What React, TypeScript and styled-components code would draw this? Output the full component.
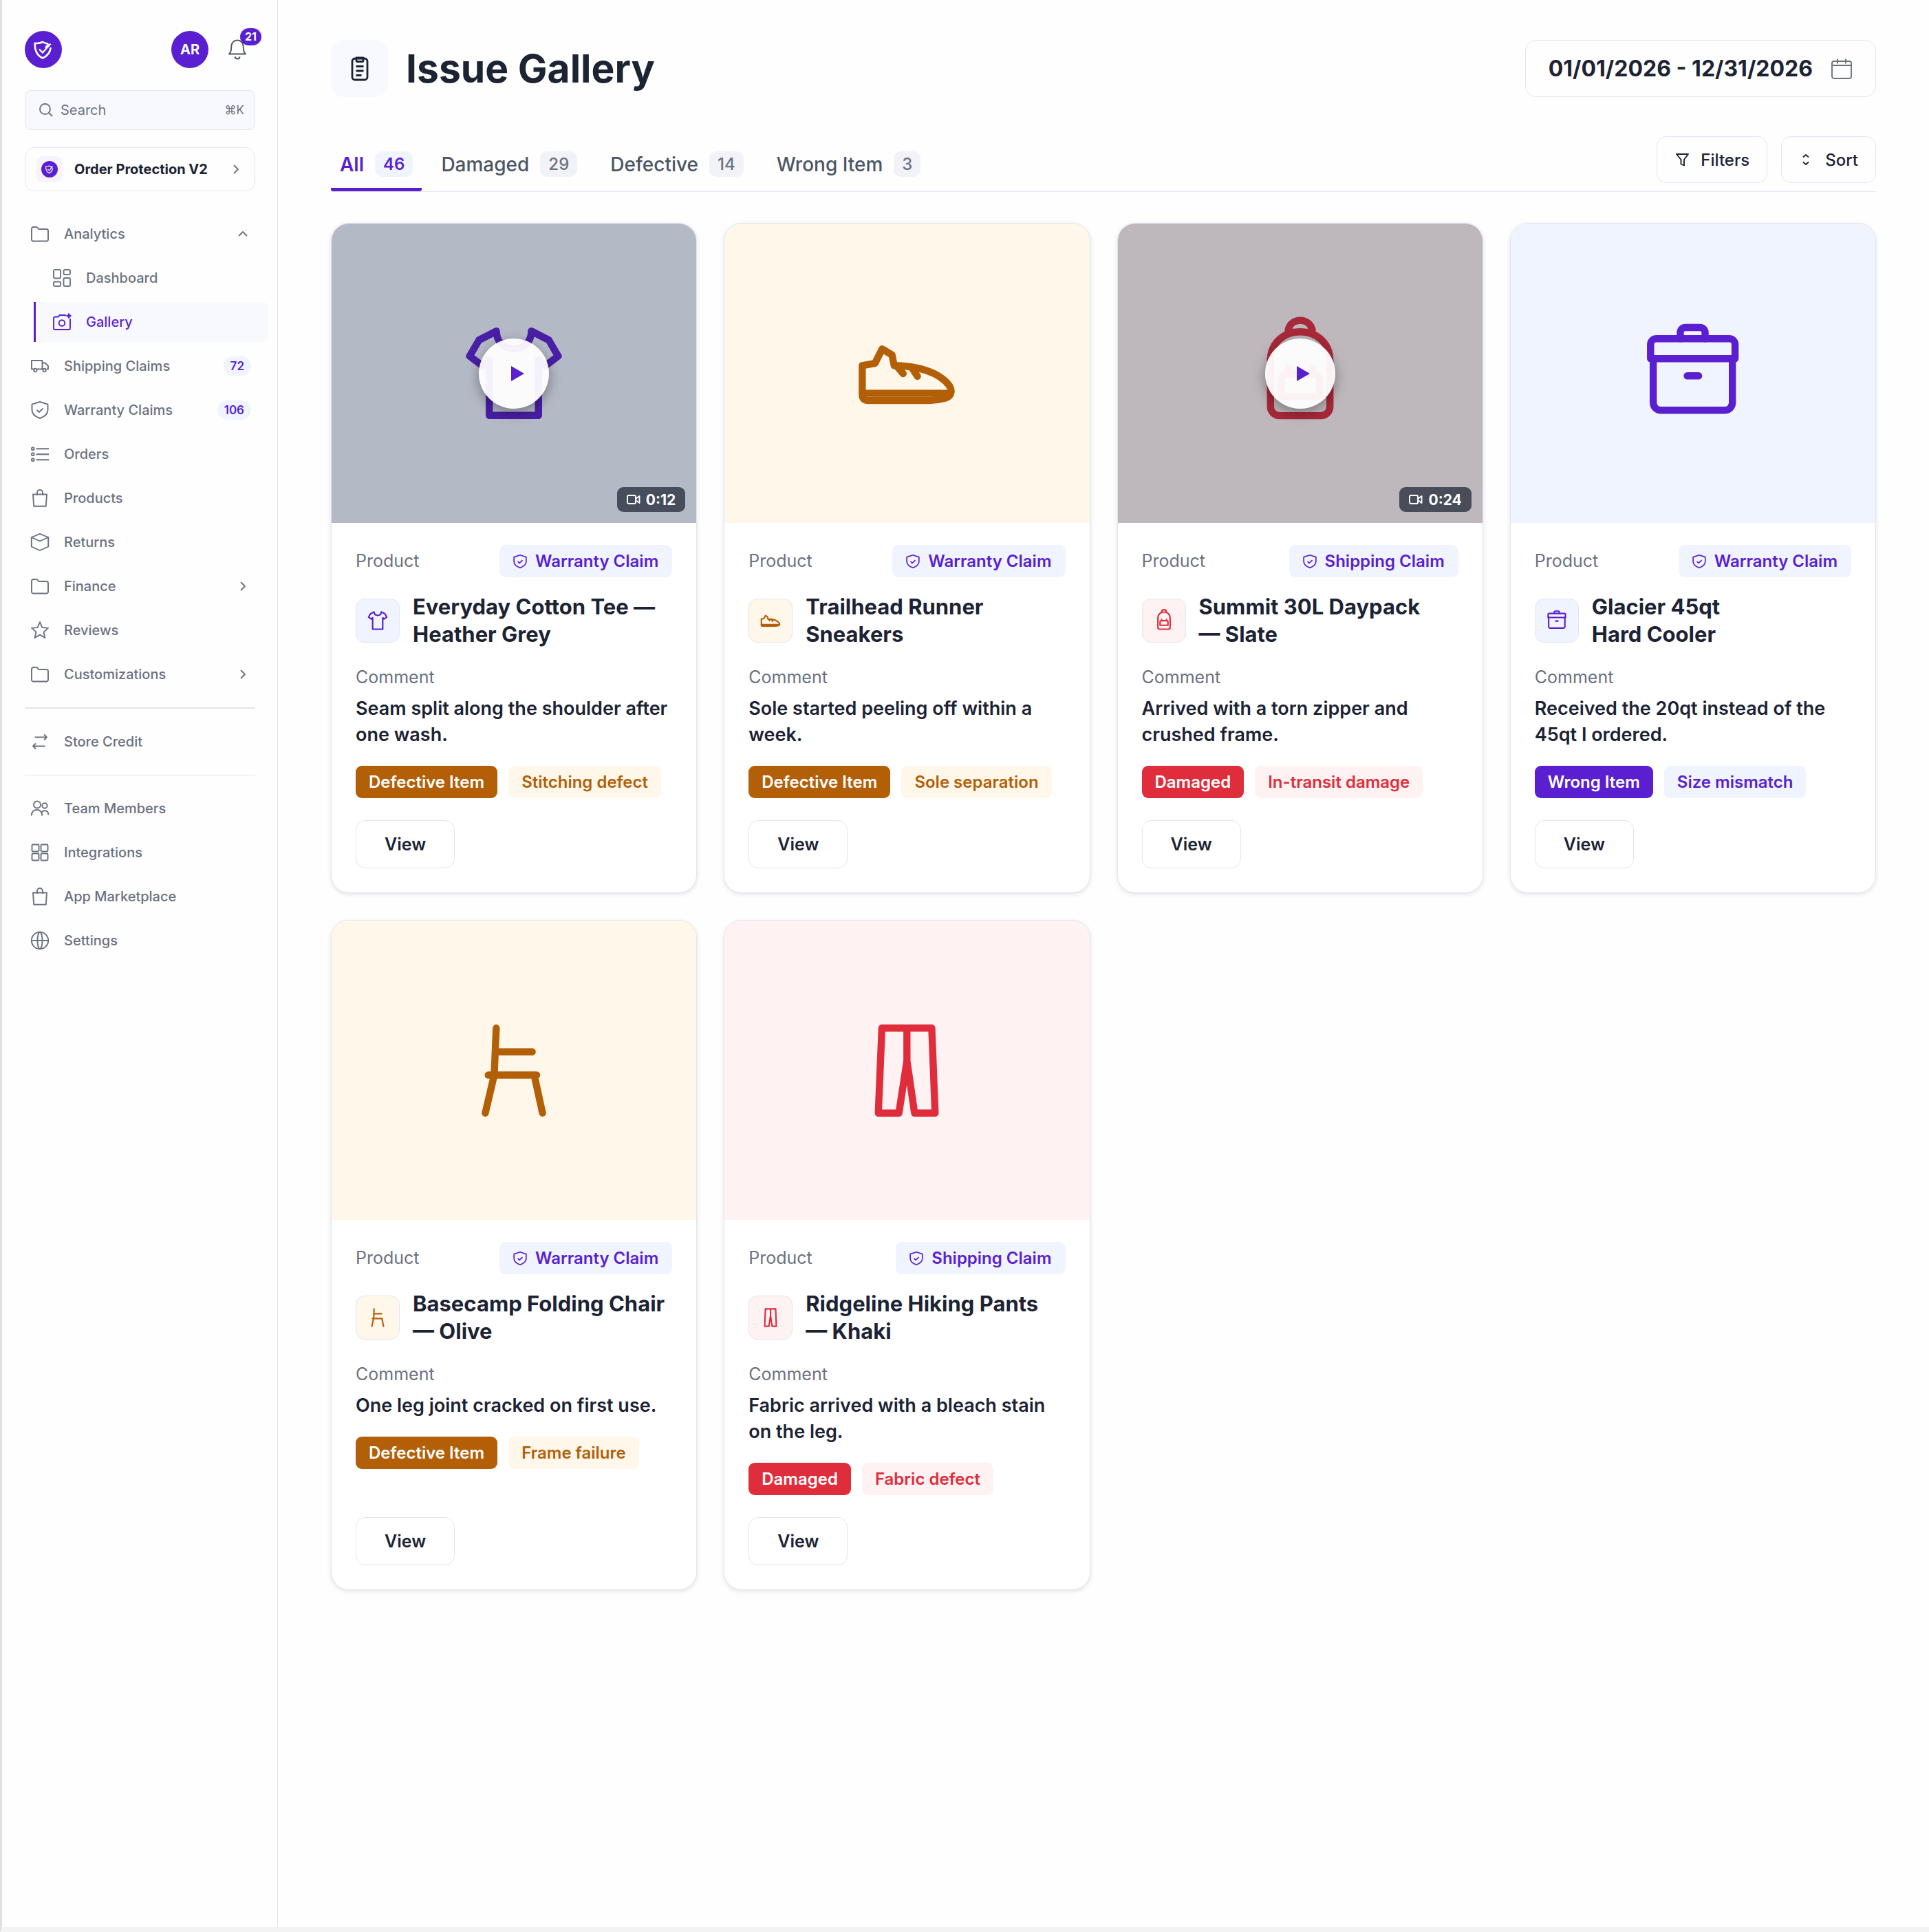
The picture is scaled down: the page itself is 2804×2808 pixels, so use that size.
import { useState } from 'react'
import type { ReactNode } from 'react'
import styled, { createGlobalStyle, css } from 'styled-components'

const color = {
  purple: '#5a1fd1',
  ink: '#1c2333',
  text: '#4b5563',
  muted: '#6b7280',
  border: '#e2e6f0',
  soft: '#f8f9fe',
}

type Tone = 'purple' | 'brown' | 'red'

const tones: Record<Tone, { main: string; light: string }> = {
  purple: { main: '#5a1fd1', light: '#f0f4ff' },
  brown: { main: '#b35f08', light: '#fff7ea' },
  red: { main: '#e02d3c', light: '#fef2f2' },
}

/* ---------- icons ---------- */

const navIcons = {
  folder: (
    <path d="M1 5.5A2.5 2.5 0 0 1 3.5 3h4.3c1 0 1.6.5 2.1 1.2l.7 1c.3.5.7.8 1.4.8h10.5A2.5 2.5 0 0 1 25 8.5v12.7A2.3 2.3 0 0 1 22.7 23.5H3.3A2.3 2.3 0 0 1 1 21.2z" />
  ),
  dashboard: (
    <>
      <rect x="1" y="1" width="10" height="12.5" rx="2" />
      <rect x="15.5" y="1" width="9.5" height="7" rx="2" />
      <rect x="1" y="18.5" width="10" height="6.5" rx="2" />
      <rect x="15.5" y="13" width="9.5" height="12" rx="2" />
    </>
  ),
  camera: (
    <>
      <path d="M19 3.5h-1l-1.500-.5h-7L8 5.5H3A2 2 0 0 0 1 7.5V22a2 2 0 0 0 2 2h20a2 2 0 0 0 2-2V8" />
      <circle cx="13" cy="14.5" r="4.3" />
      <path d="M23 .5v7M19.5 4H26.5" strokeWidth="2.6" />
    </>
  ),
  truck: (
    <>
      <path d="M4 17.5H1V5h15.500v12.500H9" />
      <path d="M16.5 8.5h4L25 13v4.500h-2.500" />
      <circle cx="6.3" cy="19" r="2.2" />
      <circle cx="19.5" cy="19" r="2.2" />
      <path d="M16.5 17.5h1" />
    </>
  ),
  shield: (
    <>
      <path d="M13 1 24.5 4.7V13c0 6-5 9.700-11.500 12C6.5 22.7 1.5 19 1.5 13V4.7z" />
      <path d="m8.5 13 3.200 3 6-5.500" />
    </>
  ),
  list: (
    <>
      <rect x="1" y="3.5" width="3.5" height="3.5" rx="1" />
      <rect x="1" y="11.5" width="3.5" height="3.5" rx="1" />
      <rect x="1" y="19.5" width="3.5" height="3.5" rx="1" />
      <path d="M7.5 5.2H26M7.5 13.2H26M7.5 21.2H26" />
    </>
  ),
  bag: (
    <>
      <path d="M3 7.5h20l-1.200 17.300H4.2z" />
      <path d="M9 9V5a4 4 0 0 1 8 0v4" />
    </>
  ),
  box: (
    <>
      <path d="M13 .8 25.2 6v13.500L13 25 .8 19.5V6z" />
      <path d="M.8 6 13 11.5 25.2 6" />
    </>
  ),
  star: (
    <path d="m13 1.2 3.400 7.900 8.600.8-6.500 5.700 1.900 8.400-7.400-4.400L5.6 24l1.900-8.400L1 9.900l8.600-.8z" />
  ),
  swap: (
    <>
      <path d="M5.5 6.5H23M19 2.5l4 4-4 4" />
      <path d="M20.5 19.5H3M7 15.5l-4 4 4 4" />
    </>
  ),
  team: (
    <>
      <circle cx="9" cy="7.5" r="5" />
      <circle cx="20" cy="9" r="3.7" />
      <path d="M.8 23.500c0-5.500 3.200-8.500 7.700-8.500s7.700 3 7.700 8.500" />
      <path d="M15.5 19c1-1.800 2.500-2.800 4.500-2.800 3.300 0 5.300 2.300 5.300 6" />
    </>
  ),
  grid: (
    <>
      <rect x="1.5" y="1.5" width="10" height="10" rx="1.5" />
      <rect x="14.5" y="1.5" width="10" height="10" rx="1.5" />
      <rect x="1.5" y="14.5" width="10" height="10" rx="1.5" />
      <rect x="14.5" y="14.5" width="10" height="10" rx="1.5" />
    </>
  ),
  globe: (
    <>
      <circle cx="13" cy="13" r="12.2" />
      <ellipse cx="13" cy="13" rx="3.5" ry="12.2" />
      <path d="M.8 13h24.400" />
    </>
  ),
}

type NavIconName = keyof typeof navIcons

const NavIcon = ({ name, size = 26 }: { name: NavIconName; size?: number }) => (
  <StrokeSvg width={size} height={size} viewBox="0 0 26 26">
    {navIcons[name]}
  </StrokeSvg>
)

const products = {
  tee: (
    <path d="M8.1 2.5C8.1 5 9.8 6.4 12 6.4S15.9 5 15.9 2.5L19.8 4.5 21.9 8.1 19 10.3 17.5 8.9V21.35H6.5V8.9L5 10.3 2.1 8.1 4.2 4.5z" />
  ),
  shoe: (
    <>
      <path d="M2.06 10.2 4.9 9.7 6.5 6.5 8.7 7.8 9.2 10.2C14.5 10.3 19.4 11.7 21.6 14.8 22.3 16.1 21.8 17.2 20.6 17.5 19.5 17.8 18.5 18 17 18H3.3C2.5 18 2.06 17.5 2.06 16.8z" />
      <path d="M2.1 16.4H21.7M10 10.6 11.2 12M13.3 10.9 14.4 12.6" />
    </>
  ),
  backpack: (
    <>
      <path d="M5.35 19.4V9C5.35 5.2 8.3 2.65 12 2.65S18.65 5.2 18.65 9V19.4A2 2 0 0 1 16.65 21.4H7.35A2 2 0 0 1 5.35 19.4z" />
      <path d="M9.3 2.3C9.6.9 10.7.1 12 .1S14.4.9 14.7 2.3" />
      <path d="M9.1 12.1H14.9A1.4 1.4 0 0 1 16.3 13.5V17.1H7.7V13.5A1.4 1.4 0 0 1 9.1 12.1zM9.4 10.8V12M14.7 10.8V12" />
    </>
  ),
  cooler: (
    <>
      <path d="M2.5 8.65V5.5A1.3 1.3 0 0 1 3.8 4.2H20.1A1.3 1.3 0 0 1 21.4 5.5V8.65z" />
      <path d="M3.1 8.65V18.5A1.7 1.7 0 0 0 4.8 20.2H19.1A1.7 1.7 0 0 0 20.8 18.5V8.65" />
      <path d="M9.15 4.2V2.8A1.1 1.1 0 0 1 10.25 1.7H13.6A1.1 1.1 0 0 1 14.7 2.8V4.2M10.7 12.5H13.25" />
    </>
  ),
  chair: (
    <path d="M8.05 2.5 7.6 13M7.95 7.8H16.1M6.26 13H17.1M7.6 13 5.6 21.5M16.55 13 18.4 21.5" />
  ),
  pants: (
    <path d="M6.45 2.5H17.6L18.35 21.5H13.75L12.05 9.8 10.25 21.5H5.65zM12.05 2.5V9.8" />
  ),
}

type ProductName = keyof typeof products

const ProductIcon = ({ name, size }: { name: ProductName; size: number }) => (
  <ProductSvg width={size} height={size} viewBox="0 0 24 24">
    {products[name]}
  </ProductSvg>
)

const Logo = ({ size }: { size: number }) => (
  <svg width={size} height={size} viewBox="0 0 54 54" fill="none">
    <circle cx="27" cy="27" r="27" fill={color.purple} />
    <path
      d="M34 18.5C31 18.5 28.5 17.5 26 16 23 17.7 19 18.3 14.8 17.8 14.3 28 17.5 35.5 26 39.5 33.5 36 37 30.5 37.7 24"
      stroke="#fff"
      strokeWidth="2.6"
    />
    <path
      d="M21 26.5 26 31.5 37.5 18.5M30 24.5 34.5 18.5"
      stroke="#fff"
      strokeWidth="2.4"
    />
  </svg>
)

const Chevron = ({ up }: { up?: boolean }) => (
  <StrokeSvg width={20} height={20} viewBox="0 0 20 20">
    <path d={up ? 'M4 13l6-6 6 6' : 'M7 4l6 6-6 6'} />
  </StrokeSvg>
)

/* ---------- data ---------- */

interface NavEntry {
  label: string
  icon: NavIconName
  count?: number
  group?: boolean
}

const mainNav: NavEntry[] = [
  { label: 'Shipping Claims', icon: 'truck', count: 72 },
  { label: 'Warranty Claims', icon: 'shield', count: 106 },
  { label: 'Orders', icon: 'list' },
  { label: 'Products', icon: 'bag' },
  { label: 'Returns', icon: 'box' },
  { label: 'Finance', icon: 'folder', group: true },
  { label: 'Reviews', icon: 'star' },
  { label: 'Customizations', icon: 'folder', group: true },
]

const adminNav: NavEntry[] = [
  { label: 'Team Members', icon: 'team' },
  { label: 'Integrations', icon: 'grid' },
  { label: 'App Marketplace', icon: 'bag' },
  { label: 'Settings', icon: 'globe' },
]

const tabs = [
  { label: 'All', count: 46 },
  { label: 'Damaged', count: 29 },
  { label: 'Defective', count: 14 },
  { label: 'Wrong Item', count: 3 },
]

interface Issue {
  title: string
  product: ProductName
  tone: Tone
  claim: string
  comment: string
  type: string
  typeTone: Tone
  reason: string
  video?: string
}

const issues: Issue[] = [
  {
    title: 'Everyday Cotton Tee —\nHeather Grey',
    product: 'tee',
    tone: 'purple',
    claim: 'Warranty Claim',
    comment: 'Seam split along the shoulder after one wash.',
    type: 'Defective Item',
    typeTone: 'brown',
    reason: 'Stitching defect',
    video: '0:12',
  },
  {
    title: 'Trailhead Runner\nSneakers',
    product: 'shoe',
    tone: 'brown',
    claim: 'Warranty Claim',
    comment: 'Sole started peeling off within a week.',
    type: 'Defective Item',
    typeTone: 'brown',
    reason: 'Sole separation',
  },
  {
    title: 'Summit 30L Daypack\n— Slate',
    product: 'backpack',
    tone: 'red',
    claim: 'Shipping Claim',
    comment: 'Arrived with a torn zipper and crushed frame.',
    type: 'Damaged',
    typeTone: 'red',
    reason: 'In-transit damage',
    video: '0:24',
  },
  {
    title: 'Glacier 45qt\nHard Cooler',
    product: 'cooler',
    tone: 'purple',
    claim: 'Warranty Claim',
    comment: 'Received the 20qt instead of the 45qt I ordered.',
    type: 'Wrong Item',
    typeTone: 'purple',
    reason: 'Size mismatch',
  },
  {
    title: 'Basecamp Folding Chair\n— Olive',
    product: 'chair',
    tone: 'brown',
    claim: 'Warranty Claim',
    comment: 'One leg joint cracked on first use.',
    type: 'Defective Item',
    typeTone: 'brown',
    reason: 'Frame failure',
  },
  {
    title: 'Ridgeline Hiking Pants\n— Khaki',
    product: 'pants',
    tone: 'red',
    claim: 'Shipping Claim',
    comment: 'Fabric arrived with a bleach stain on the leg.',
    type: 'Damaged',
    typeTone: 'red',
    reason: 'Fabric defect',
  },
]

/* ---------- components ---------- */

const NavRow = ({ entry }: { entry: NavEntry }) => {
  const content: ReactNode = (
    <>
      <NavIcon name={entry.icon} />
      <NavLabel>{entry.label}</NavLabel>
      {entry.count && <NavCount>{entry.count}</NavCount>}
      {entry.group && <Chevron />}
    </>
  )
  return entry.group ? (
    <NavButton type="button" aria-expanded={false}>
      {content}
    </NavButton>
  ) : (
    <NavLink href="#">{content}</NavLink>
  )
}

const Sidebar = () => (
  <Aside>
    <SideHeader>
      <Logo size={54} />
      <Account>
        <Avatar type="button" aria-label="Account">
          AR
        </Avatar>
        <Bell type="button" aria-label="Notifications">
          <StrokeSvg width={26} height={30} viewBox="0 0 26 30">
            <path d="M1 21.5c2.500-2 3.300-5 3.300-11C4.3 5.5 8 1.5 13 1.5s8.700 4 8.700 9c0 6 .8 9 3.300 11z" />
            <path d="M9.5 25.5c.5 2 1.700 3 3.500 3s3-1 3.500-3" strokeWidth="2.2" />
          </StrokeSvg>
          <BellCount>21</BellCount>
        </Bell>
      </Account>
    </SideHeader>

    <SearchBox>
      <StrokeSvg width={20} height={20} viewBox="0 0 20 20">
        <circle cx="8.5" cy="8.5" r="7.5" />
        <path d="m14 14 5 5" />
      </StrokeSvg>
      <SearchInput type="search" placeholder="Search" aria-label="Search" />
      <Shortcut>⌘K</Shortcut>
    </SearchBox>

    <AppSwitch type="button">
      <AppTile>
        <Logo size={24} />
      </AppTile>
      <AppName>Order Protection V2</AppName>
      <Chevron />
    </AppSwitch>

    <Nav aria-label="Main">
      <NavButton type="button" aria-expanded>
        <NavIcon name="folder" />
        <NavLabel>Analytics</NavLabel>
        <Chevron up />
      </NavButton>
      <SubLink href="#" $active={false}>
        <NavIcon name="dashboard" />
        <NavLabel>Dashboard</NavLabel>
      </SubLink>
      <SubLink href="#" $active aria-current="page">
        <NavIcon name="camera" />
        <NavLabel>Gallery</NavLabel>
      </SubLink>
      {mainNav.map(entry => (
        <NavRow key={entry.label} entry={entry} />
      ))}
    </Nav>
    <Divider $thick />
    <NavRow entry={{ label: 'Store Credit', icon: 'swap' }} />
    <Divider />
    <Nav aria-label="Administration">
      {adminNav.map(entry => (
        <NavRow key={entry.label} entry={entry} />
      ))}
    </Nav>
  </Aside>
)

const IssueCard = ({ issue }: { issue: Issue }) => (
  <Card>
    <Media $tone={issue.tone}>
      <ProductIcon name={issue.product} size={156} />
      {issue.video && (
        <>
          <Shade />
          <Play type="button" aria-label="Play video">
            <svg width="22" height="24" viewBox="0 0 22 24">
              <path d="M3 1v22l19-11z" fill={color.purple} />
            </svg>
          </Play>
          <Duration>
            <StrokeSvg width={20} height={20} viewBox="0 0 20 20">
              <rect x="1" y="4" width="12" height="12" rx="2" />
              <path d="m13 9 5.500-4v10L13 11" />
            </StrokeSvg>
            {issue.video}
          </Duration>
        </>
      )}
    </Media>
    <CardBody>
      <CardTop>
        <FieldLabel>Product</FieldLabel>
        <ClaimBadge>
          <NavIcon name="shield" size={20} />
          {issue.claim}
        </ClaimBadge>
      </CardTop>
      <ProductRow>
        <ProductTile $tone={issue.tone}>
          <ProductIcon name={issue.product} size={32} />
        </ProductTile>
        <ProductTitle>{issue.title}</ProductTitle>
      </ProductRow>
      <FieldLabel>Comment</FieldLabel>
      <Comment>{issue.comment}</Comment>
      <Tags>
        <Tag $tone={issue.typeTone} $solid>
          {issue.type}
        </Tag>
        <Tag $tone={issue.typeTone}>{issue.reason}</Tag>
      </Tags>
      <ViewButton type="button">View</ViewButton>
    </CardBody>
  </Card>
)

const App = () => {
  const [tab, setTab] = useState('All')

  return (
    <>
      <GlobalStyle />
      <Shell>
        <Sidebar />
        <Main>
          <PageHeader>
            <TitleGroup>
              <TitleTile>
                <StrokeSvg width={36} height={36} viewBox="0 0 36 36">
                  <g strokeWidth="2.8">
                    <rect x="7" y="3" width="22" height="31" rx="4" />
                    <path d="M13 2h10v4a1.500 1.500 0 0 1-1.500 1.500h-7A1.500 1.500 0 0 1 13 6z" />
                    <path d="M12.5 14.5h11M12.5 21h11M12.5 27.5h8" />
                  </g>
                </StrokeSvg>
              </TitleTile>
              <Title>Issue Gallery</Title>
            </TitleGroup>
            <DateButton type="button">
              01/01/2026 - 12/31/2026
              <StrokeSvg width={32} height={32} viewBox="0 0 32 32">
                <rect x="2" y="5" width="28" height="25" rx="3" />
                <path d="M2 11h28M10 1.5v7M22 1.5v7" />
              </StrokeSvg>
            </DateButton>
          </PageHeader>

          <Toolbar>
            <TabList role="tablist">
              {tabs.map(({ label, count }) => (
                <Tab
                  key={label}
                  type="button"
                  role="tab"
                  aria-selected={tab === label}
                  $active={tab === label}
                  onClick={() => setTab(label)}
                >
                  {label}
                  <TabCount $active={tab === label}>{count}</TabCount>
                </Tab>
              ))}
            </TabList>
            <Actions>
              <ActionButton type="button">
                <StrokeSvg width={20} height={20} viewBox="0 0 20 20">
                  <path d="M3 2h17l-6 8v8.500l-4.500-2V10z" />
                </StrokeSvg>
                Filters
              </ActionButton>
              <ActionButton type="button">
                <StrokeSvg width={20} height={20} viewBox="0 0 20 20">
                  <path d="M6 6.5 10 3l4 3.500M6 13.5l4 3.500 4-3.500" />
                </StrokeSvg>
                Sort
              </ActionButton>
            </Actions>
          </Toolbar>

          <CardGrid>
            {issues.map(issue => (
              <IssueCard key={issue.title} issue={issue} />
            ))}
          </CardGrid>
        </Main>
      </Shell>
    </>
  )
}

/* ---------- styles ---------- */

const GlobalStyle = createGlobalStyle`
  * {
    box-sizing: border-box;
  }
  body {
    margin: 0;
    background: #fefefe;
    color: ${color.ink};
    font-family: Inter, 'Liberation Sans', sans-serif;
    -webkit-font-smoothing: antialiased;
  }
  button, input {
    font: inherit;
    color: inherit;
  }
  button {
    padding: 0;
    border: none;
    background: none;
    cursor: pointer;
  }
  a {
    color: inherit;
    text-decoration: none;
  }
`

const StrokeSvg = styled.svg`
  flex: none;
  fill: none;
  stroke: currentColor;
  stroke-width: 1.9;
  stroke-linejoin: round;
  overflow: visible;
`

const ProductSvg = styled(StrokeSvg)`
  stroke-width: 1.6;
  stroke-linecap: round;
`

const Shell = styled.div`
  display: flex;
  min-height: 100vh;
  border-left: 3px solid #e0e0e1;
  border-bottom: 7px solid #f3f3f3;
`

const Aside = styled.aside`
  flex: none;
  width: 401px;
  padding: 45px 32px 32px 33px;
  border-right: 1px solid #e2e3e8;
`

const SideHeader = styled.div`
  display: flex;
  align-items: center;
  justify-content: space-between;
`

const Account = styled.div`
  display: flex;
  align-items: center;
  gap: 29px;
  padding-right: 13px;
`

const Avatar = styled.button`
  width: 54px;
  height: 54px;
  border-radius: 50%;
  background: ${color.purple};
  color: #fff;
  font-size: 20px;
  font-weight: 700;
`

const Bell = styled.button`
  position: relative;
  display: flex;
  color: ${color.text};
`

const BellCount = styled.span`
  position: absolute;
  top: -16px;
  left: 17px;
  padding: 0 7px;
  border-radius: 13px;
  background: ${color.purple};
  color: #fff;
  font-size: 16px;
  font-weight: 700;
  line-height: 25px;
`

const SearchBox = styled.label`
  display: flex;
  align-items: center;
  gap: 11px;
  height: 58px;
  margin-top: 32px;
  padding: 0 15px 0 20px;
  border: 1px solid ${color.border};
  border-radius: 9px;
  background: ${color.soft};
  color: ${color.muted};
`

const SearchInput = styled.input`
  flex: 1;
  min-width: 0;
  padding: 0;
  border: none;
  outline: none;
  background: none;
  font-size: 20px;
  &::placeholder {
    color: ${color.muted};
    opacity: 1;
  }
`

const Shortcut = styled.span`
  font-size: 17px;
`

const AppSwitch = styled.button`
  display: flex;
  align-items: center;
  gap: 17px;
  width: 100%;
  height: 64px;
  margin-top: 25px;
  padding: 0 17px 0 16px;
  border: 1px solid ${color.border};
  border-radius: 14px;
  color: ${color.muted};
`

const AppTile = styled.span`
  display: grid;
  place-items: center;
  width: 38px;
  height: 38px;
  border-radius: 9px;
  background: #f7f4fe;
`

const AppName = styled.span`
  flex: 1;
  color: ${color.ink};
  font-size: 20px;
  font-weight: 700;
  text-align: left;
  white-space: nowrap;
`

const Nav = styled.nav`
  display: flex;
  flex-direction: column;
  gap: 6px;
  ${AppSwitch} + & {
    margin-top: 33px;
  }
`

const navRow = css`
  display: flex;
  align-items: center;
  gap: 22px;
  height: 58px;
  padding: 0 6px 0 9px;
  color: ${color.muted};
  font-size: 20px;
  font-weight: 500;
`

const NavLink = styled.a`
  ${navRow}
`

const NavButton = styled.button`
  ${navRow}
  padding-right: 8px;
`

const SubLink = styled.a<{ $active: boolean }>`
  ${navRow}
  margin: 0 -19px 0 13px;
  padding-left: 25px;
  border-left: 3px solid transparent;
  border-radius: 0 8px 8px 0;
  ${({ $active }) =>
    $active &&
    css`
      border-left-color: ${color.purple};
      background: ${color.soft};
      color: ${color.purple};
    `}
`

const NavLabel = styled.span`
  flex: 1;
  text-align: left;
`

const NavCount = styled.span`
  padding: 0 10px;
  border-radius: 14px;
  background: #f0f4ff;
  color: ${color.purple};
  font-size: 17px;
  font-weight: 600;
  line-height: 28px;
`

const Divider = styled.hr<{ $thick?: boolean }>`
  height: ${({ $thick }) => ($thick ? '2px' : '1px')};
  margin: 19px 0;
  border: none;
  background: ${color.border};
`

const Main = styled.main`
  flex: 1;
  min-width: 0;
  padding: 58px 77px;
`

const PageHeader = styled.header`
  display: flex;
  align-items: center;
  justify-content: space-between;
`

const TitleGroup = styled.div`
  display: flex;
  align-items: center;
  gap: 26px;
`

const TitleTile = styled.div`
  display: grid;
  place-items: center;
  width: 83px;
  height: 83px;
  border-radius: 18px;
  background: ${color.soft};
`

const Title = styled.h1`
  margin: 0;
  font-size: 57px;
  font-weight: 700;
  line-height: 68px;
`

const DateButton = styled.button`
  display: flex;
  align-items: center;
  gap: 26px;
  height: 83px;
  padding: 0 33px;
  border: 1px solid ${color.border};
  border-radius: 16px;
  font-size: 32px;
  font-weight: 700;
  ${StrokeSvg} {
    color: ${color.muted};
  }
`

const Toolbar = styled.div`
  display: flex;
  justify-content: space-between;
  height: 81px;
  margin-top: 57px;
  border-bottom: 1px solid ${color.border};
`

const TabList = styled.div`
  display: flex;
  gap: 8px;
`

const Tab = styled.button<{ $active: boolean }>`
  display: flex;
  align-items: center;
  gap: 16px;
  height: 80px;
  padding: ${({ $active }) => ($active ? '6px 13px 0' : '6px 20px 0')};
  border-bottom: 5px solid
    ${({ $active }) => ($active ? color.purple : 'transparent')};
  border-radius: 3px;
  color: ${({ $active }) => ($active ? color.purple : color.text)};
  font-size: 28px;
  font-weight: ${({ $active }) => ($active ? 600 : 500)};
`

const TabCount = styled.span<{ $active: boolean }>`
  padding: 0 12px;
  border-radius: 10px;
  background: ${({ $active }) => ($active ? '#f0f4ff' : '#f2f3f8')};
  color: ${({ $active }) => ($active ? color.purple : color.muted)};
  font-size: 24px;
  line-height: 37px;
`

const Actions = styled.div`
  display: flex;
  align-items: flex-start;
  gap: 20px;
`

const ActionButton = styled.button`
  display: flex;
  align-items: center;
  gap: 18px;
  height: 68px;
  padding: 0 25px;
  border: 1px solid ${color.border};
  border-radius: 14px;
  font-size: 24px;
  font-weight: 500;
`

const CardGrid = styled.div`
  display: grid;
  grid-template-columns: repeat(4, minmax(0, 1fr));
  gap: 39px;
  margin-top: 45px;
`

const Card = styled.article`
  display: flex;
  flex-direction: column;
  overflow: hidden;
  border: 1px solid ${color.border};
  border-radius: 26px;
  background: #fff;
  box-shadow: 0 2px 6px rgba(28, 35, 51, 0.12);
`

const Media = styled.div<{ $tone: Tone }>`
  position: relative;
  display: grid;
  place-items: center;
  height: 435px;
  background: ${({ $tone }) => tones[$tone].light};
  color: ${({ $tone }) => tones[$tone].main};
`

const Shade = styled.div`
  position: absolute;
  inset: 0;
  background: rgba(26, 33, 51, 0.28);
`

const Play = styled.button`
  position: absolute;
  inset: 0;
  display: grid;
  place-items: center;
  width: 102px;
  height: 102px;
  margin: auto;
  padding-left: 7px;
  border-radius: 50%;
  background: rgba(255, 255, 255, 0.94);
  box-shadow: 0 6px 18px rgba(0, 0, 0, 0.35);
`

const Duration = styled.span`
  position: absolute;
  right: 16px;
  bottom: 16px;
  display: flex;
  align-items: center;
  gap: 8px;
  height: 36px;
  padding: 0 14px;
  border-radius: 9px;
  background: rgba(28, 35, 51, 0.72);
  color: #fff;
  font-size: 21px;
  font-weight: 700;
`

const CardBody = styled.div`
  display: flex;
  flex: 1;
  flex-direction: column;
  padding: 32px 35px 35px;
`

const CardTop = styled.div`
  display: flex;
  align-items: center;
  justify-content: space-between;
`

const FieldLabel = styled.span`
  color: ${color.muted};
  font-size: 25px;
  line-height: 37px;
`

const ClaimBadge = styled.span`
  display: flex;
  align-items: center;
  gap: 12px;
  padding: 0 20px;
  border-radius: 9px;
  background: #f0f4ff;
  color: ${color.purple};
  font-size: 24px;
  font-weight: 600;
  line-height: 47px;
  ${StrokeSvg} {
    stroke-width: 2.2;
  }
`

const ProductRow = styled.div`
  display: flex;
  align-items: center;
  gap: 19px;
  margin: 23px 0 24px;
`

const ProductTile = styled.div<{ $tone: Tone }>`
  display: grid;
  flex: none;
  place-items: center;
  width: 64px;
  height: 64px;
  border: 1px solid ${color.border};
  border-radius: 13px;
  background: ${({ $tone }) => tones[$tone].light};
  color: ${({ $tone }) => tones[$tone].main};
`

const ProductTitle = styled.h2`
  margin: 0;
  font-size: 31px;
  font-weight: 700;
  line-height: 40px;
  white-space: pre-line;
`

const Comment = styled.p`
  margin: 8px 0 26px;
  font-size: 27px;
  font-weight: 600;
  line-height: 38px;
`

const Tags = styled.div`
  display: flex;
  gap: 16px;
  margin-bottom: 32px;
`

const Tag = styled.span<{ $tone: Tone; $solid?: boolean }>`
  padding: 0 19px;
  border-radius: 9px;
  background: ${({ $tone, $solid }) =>
    $solid ? tones[$tone].main : tones[$tone].light};
  color: ${({ $tone, $solid }) => ($solid ? '#fff' : tones[$tone].main)};
  font-size: 24px;
  font-weight: 600;
  line-height: 47px;
  white-space: nowrap;
`

const ViewButton = styled.button`
  align-self: flex-start;
  height: 70px;
  margin-top: auto;
  padding: 0 41px;
  border: 1px solid ${color.border};
  border-radius: 14px;
  font-size: 25px;
  font-weight: 600;
`

export default App
